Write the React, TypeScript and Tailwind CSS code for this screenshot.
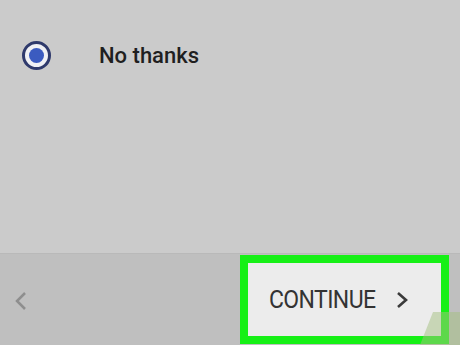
import { FC } from 'react';

const App: FC = () => {
  return (
    <div
      className="relative w-[460px] h-[345px] overflow-hidden flex flex-col bg-[#cbcbcb]"
      style={{ fontFamily: 'Roboto, "Liberation Sans", sans-serif' }}
    >
      <div className="flex-1">
        <div className="flex items-center pt-[39px] pl-[22px]">
          <span className="w-[29px] h-[29px] rounded-full border-[3px] border-[#2f3a6c] flex items-center justify-center bg-[#f0f1f5]">
            <span className="w-[15px] h-[15px] rounded-full bg-[#3b5bc0]" />
          </span>
          <span className="ml-[48px] text-[22px] font-medium text-[#1f1f1f]">
            No thanks
          </span>
        </div>
      </div>
      <div className="h-[92px] bg-[#bfbfbf] border-t border-[#b9b9b9] flex items-center justify-between pl-[14px] pr-[11px]">
        <svg width="14" height="20" viewBox="0 0 14 20" className="mt-[3px]">
          <path d="M11 2 L3 10 L11 18" fill="none" stroke="#8e8e8e" strokeWidth="2.5" />
        </svg>
        <div className="w-[209px] h-[89px] border-[8px] border-[#16f016] bg-[#ececec] flex items-center pl-[21px]">
          <span className="text-[23px] text-[#333] tracking-[-0.6px] scale-y-110 mt-[2px]">CONTINUE</span>
          <svg width="14" height="18" viewBox="0 0 14 18" className="ml-[20px]">
            <path d="M3 2 L11 9 L3 16" fill="none" stroke="#3a3a3a" strokeWidth="2.6" />
          </svg>
        </div>
      </div>
      <svg className="absolute right-0 bottom-0" width="40" height="33" viewBox="0 0 40 33">
        <polygon points="0,33 13,0 40,0 40,33" fill="#a3c07f" fillOpacity="0.5" />
      </svg>
    </div>
  );
};

export default App;
